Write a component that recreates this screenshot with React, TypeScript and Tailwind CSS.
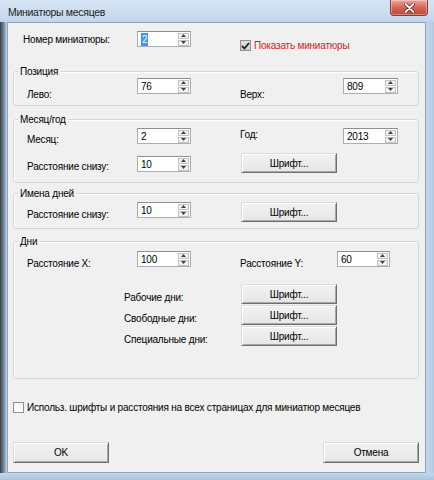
import React from "react";

function Arrow({ up }: { up?: boolean }) {
  return (
    <svg width="5" height="3" viewBox="0 0 5 3" className="block">
      {up ? <path d="M2.5 0 L5 3 L0 3 Z" fill="#404040" /> : <path d="M0 0 L5 0 L2.5 3 Z" fill="#404040" />}
    </svg>
  );
}

const TXT = "text-[10px] leading-[13px] tracking-[-0.2px]";

function Spin({ value, w, selected }: { value: string; w: string; selected?: boolean }) {
  return (
    <div className={`flex h-[16px] shrink-0 border border-[#abadb3] border-t-[#8e8f8f] bg-white ${w}`}>
      <div className={`flex flex-1 items-center pl-[3px] text-black ${TXT}`}>
        {selected ? <span className="bg-[#3399ff] px-[1px] text-white">{value}</span> : value}
      </div>
      <div className="mr-[1px] flex w-[11px] flex-col justify-center gap-[1px]">
        <div className="flex h-[6px] items-center justify-center border border-[#c3c3c3] bg-[#f3f3f3]">
          <Arrow up />
        </div>
        <div className="flex h-[6px] items-center justify-center border border-[#c3c3c3] bg-[#f3f3f3]">
          <Arrow />
        </div>
      </div>
    </div>
  );
}

function Btn({ label, className }: { label: string; className: string }) {
  return (
    <div
      className={`flex shrink-0 items-center justify-center border-t border-l border-r border-b border-t-[#dcdcdc] border-l-[#dcdcdc] border-r-[#6f6f6f] border-b-[#6f6f6f] bg-gradient-to-b from-[#f2f2f2] to-[#e6e6e6] text-black shadow-[inset_1px_1px_0_#ffffff,inset_-1px_-1px_0_#a8a8a8] ${TXT} ${className}`}
    >
      {label}
    </div>
  );
}

function L({ children, className, red }: { children: React.ReactNode; className: string; red?: boolean }) {
  return (
    <div className={`shrink-0 whitespace-nowrap ${TXT} ${red ? "text-[#d7191f]" : "text-black"} ${className}`}>
      {children}
    </div>
  );
}

function Group({ title, className, children }: { title: string; className: string; children: React.ReactNode }) {
  return (
    <fieldset className={`ml-[5px] w-[406px] rounded-[3px] border border-[#d0d7dd] shadow-[inset_1px_1px_0_#ffffff] ${className}`}>
      <legend className={`ml-[4px] px-[2px] text-black ${TXT}`}>{title}</legend>
      {children}
    </fieldset>
  );
}

export default function App() {
  return (
    <div className="flex h-[480px] w-[434px] flex-col overflow-hidden bg-[#c3d7ec] font-['Liberation_Sans',Arial,sans-serif]">
      {/* title bar */}
      <div className="flex h-[22px] shrink-0 items-start justify-between bg-gradient-to-b from-[#d6e5f4] to-[#c2d6eb]">
        <div className="pl-[8px] pt-[5px] text-[10.5px] leading-[14px] tracking-[-0.3px] text-[#1e1e1e]">Миниатюры месяцев</div>
        <div className="mr-[6px] flex h-[16px] w-[38px] items-center justify-center rounded-b-[4px] border border-t-0 border-[#8a3b33] bg-gradient-to-b from-[#e9a99b] via-[#d3665a] to-[#c2443a] shadow-[inset_0_0_0_1px_rgba(255,255,255,0.35)]">
          <svg width="11" height="10" viewBox="0 0 11 10">
            <path d="M1.5 1 L9.5 9 M9.5 1 L1.5 9" stroke="#5a1a14" strokeWidth="3.2" strokeLinecap="round" />
            <path d="M1.5 1 L9.5 9 M9.5 1 L1.5 9" stroke="#ffffff" strokeWidth="1.8" strokeLinecap="round" />
          </svg>
        </div>
      </div>
      <div className="flex flex-1">
        <div className="w-[7px] shrink-0 bg-gradient-to-r from-[#3d4147] via-[#6f8296] to-[#c3d7ec]" />
        {/* client */}
        <div className="flex flex-1 flex-col border border-[#8fa3ba] bg-[#f0f0f0]">
          {/* row 1 */}
          <div className="mt-[8px] flex h-[19px] items-start pl-[15px]">
            <L className="mt-[2px] w-[114px]">Номер миниатюры:</L>
            <Spin value="2" w="w-[54px]" selected />
            <div className="ml-[49px] mt-[8px] flex items-center">
              <div className="flex h-[11px] w-[11px] items-center justify-center border border-[#8e8f8f] bg-gradient-to-b from-[#e2e2e2] to-[#cfcfcf]">
                <svg width="9" height="8" viewBox="0 0 9 8">
                  <path d="M1 4 L3.5 6.5 L8 1" stroke="#222" strokeWidth="1.8" fill="none" />
                </svg>
              </div>
              <L className="ml-[3px]" red>
                Показать миниатюры
              </L>
            </div>
          </div>

          {/* Позиция */}
          <Group title="Позиция" className="mt-[15px]">
            <div className="flex h-[27px] items-start pl-[13px]">
              <L className="mt-[10px] w-[110px]">Лево:</L>
              <Spin value="76" w="w-[54px]" />
              <L className="ml-[49px] mt-[10px] w-[103px]">Верх:</L>
              <Spin value="809" w="w-[55px]" />
            </div>
          </Group>

          {/* Месяц/год */}
          <Group title="Месяц/год" className="mt-[7px]">
            <div className="flex flex-col pb-[9px] pl-[13px] pt-[2px]">
              <div className="flex h-[25px] items-start">
                <L className="mt-[5px] w-[110px]">Месяц:</L>
                <Spin value="2" w="w-[54px]" />
                <L className="ml-[49px] mt-0 w-[103px]">Год:</L>
                <Spin value="2013" w="w-[55px]" />
              </div>
              <div className="flex h-[20px] items-start">
                <L className="mt-[7px] w-[110px]">Расстояние снизу:</L>
                <div className="mt-[3px]">
                  <Spin value="10" w="w-[54px]" />
                </div>
                <Btn label="Шрифт..." className="ml-[50px] h-[20px] w-[96px]" />
              </div>
            </div>
          </Group>

          {/* Имена дней */}
          <Group title="Имена дней" className="mt-[4px]">
            <div className="mb-[5px] mt-[2px] flex h-[21px] items-start pl-[13px]">
              <L className="mt-[6px] w-[110px]">Расстояние снизу:</L>
              <Spin value="10" w="w-[54px]" />
              <Btn label="Шрифт..." className="ml-[50px] h-[20px] w-[96px]" />
            </div>
          </Group>

          {/* Дни */}
          <Group title="Дни" className="mt-[6px]">
            <div className="flex flex-col pb-[32px] pl-[13px] pt-[3px]">
              <div className="flex h-[20px] items-start">
                <L className="mt-[6px] w-[110px]">Расстояние X:</L>
                <Spin value="100" w="w-[54px]" />
                <L className="ml-[49px] mt-[6px] w-[97px]">Расстояние Y:</L>
                <Spin value="60" w="w-[53px]" />
              </div>
              <div className="mt-[13px] flex flex-col gap-[1px]">
                <div className="flex h-[20px] items-start">
                  <L className="ml-[97px] mt-[7px] w-[117px]">Рабочие дни:</L>
                  <Btn label="Шрифт..." className="h-[20px] w-[96px]" />
                </div>
                <div className="flex h-[20px] items-start">
                  <L className="ml-[97px] mt-[7px] w-[117px]">Свободные дни:</L>
                  <Btn label="Шрифт..." className="h-[20px] w-[96px]" />
                </div>
                <div className="flex h-[20px] items-start">
                  <L className="ml-[97px] mt-[7px] w-[117px]">Специальные дни:</L>
                  <Btn label="Шрифт..." className="h-[20px] w-[96px]" />
                </div>
              </div>
            </div>
          </Group>

          {/* checkbox */}
          <div className="ml-[5px] mt-[21px] flex h-[14px] items-center">
            <div className="h-[11px] w-[11px] shrink-0 border border-[#8e8f8f] bg-gradient-to-b from-[#f4f4f4] to-[#ffffff]" />
            <L className="ml-[3px]">Использ. шрифты и расстояния на всех страницах для миниатюр месяцев</L>
          </div>

          {/* buttons */}
          <div className="ml-[5px] mt-[28px] flex w-[406px] justify-between">
            <Btn label="OK" className="h-[21px] w-[96px]" />
            <Btn label="Отмена" className="h-[21px] w-[96px]" />
          </div>
        </div>
        <div className="w-[8px] shrink-0 bg-gradient-to-r from-[#c3d7ec] to-[#b4cbe3]" />
      </div>
      <div className="h-[7px] shrink-0 bg-gradient-to-b from-[#c3d7ec] to-[#aac3de]" />
    </div>
  );
}
